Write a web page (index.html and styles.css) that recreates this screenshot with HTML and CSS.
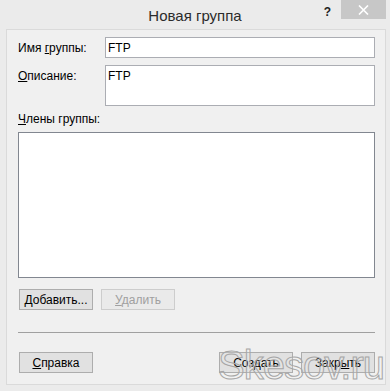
FILE: index.html
```html
<!DOCTYPE html>
<html lang="ru">
<head>
    <meta charset="UTF-8">
    <title>Новая группа</title>
    <link rel="stylesheet" href="styles.css">
</head>
<body>

<div class="window">
    <div class="titlebar">
        <span></span>
        <span class="title">Новая группа</span>
        <div class="controls">
            <span class="help">?</span>
            <span class="close">
                <svg width="11" height="10" viewBox="0 0 11 10">
                    <path d="M1 0.5 L10 9.5 M10 0.5 L1 9.5" stroke="#fff" stroke-width="1.6" fill="none"/>
                </svg>
            </span>
        </div>
    </div>

    <div class="panel">
        <div class="form-grid">
            <label>Имя <u>г</u>руппы:</label>
            <div class="field">FTP</div>
            <label><u>О</u>писание:</label>
            <div class="field area">FTP</div>
        </div>

        <div class="members-label"><u>Ч</u>лены группы:</div>
        <div class="listbox"></div>

        <div class="btn-row">
            <button class="btn"><u>Д</u>обавить...</button>
            <button class="btn" disabled><u>У</u>далить</button>
        </div>

        <div class="separator"></div>

        <div class="btn-row footer">
            <button class="btn"><u>С</u>правка</button>
            <div class="btn-group">
                <button class="btn">Соз<u>д</u>ать</button>
                <button class="btn">Закр<u>ы</u>ть</button>
            </div>
        </div>
    </div>

    <div class="watermark">Skesov.ru</div>
</div>

</body>
</html>
```

FILE: styles.css
```css
/* Global */
* {
    box-sizing: border-box;
    margin: 0;
    padding: 0;
}
body {
    background-color: #ebebeb;
    font-family: 'Liberation Sans', Arial, sans-serif;
    font-size: 12px;
    color: #000;
    overflow: hidden;
}
u {
    text-decoration: underline;
    text-underline-offset: 1px;
}

/* Window frame */
.window {
    position: relative;
    width: 390px;
    height: 391px;
    background-color: #ebebeb;
}
.titlebar {
    display: grid;
    grid-template-columns: 1fr auto 1fr;
    height: 29px;
}
.title {
    font-size: 15px;
    color: #2b2b2b;
    padding-top: 7px;
    line-height: 17px;
}
.controls {
    display: flex;
    justify-content: flex-end;
    align-items: flex-start;
}
.help {
    font-weight: bold;
    font-size: 12px;
    color: #222;
    margin-top: 5px;
    margin-right: 10px;
}
.close {
    display: flex;
    align-items: center;
    justify-content: center;
    width: 45px;
    height: 19px;
    background-color: #c7c7c7;
    margin-right: 4px;
}

/* Client area */
.panel {
    height: 356px;
    margin: 0 4px 0 6px;
    padding: 7px 10px 0 11px;
    background-color: #f0f0f0;
    border: 1px solid #dadada;
}
.form-grid {
    display: grid;
    grid-template-columns: 87px 1fr;
    row-gap: 7px;
}
.form-grid label {
    padding-top: 4px;
    line-height: 14px;
}
.field {
    height: 21px;
    padding: 3px 2px 0;
    line-height: 14px;
    background-color: #fff;
    border: 1px solid #abadb3;
}
.field.area {
    height: 41px;
}
.members-label {
    margin-top: 6px;
    line-height: 15px;
    margin-bottom: 5px;
}
.listbox {
    height: 146px;
    background-color: #fff;
    border: 1px solid #828790;
}

/* Buttons */
.btn-row {
    display: flex;
    gap: 8px;
    margin-top: 11px;
    padding-left: 1px;
}
.btn {
    width: 74px;
    height: 21px;
    font-family: inherit;
    font-size: 12px;
    color: #000;
    background-color: #e1e1e1;
    border: 1px solid #adadad;
}
.btn:disabled {
    color: #a0a0a0;
    background-color: #eaeaea;
    border-color: #cdcdcd;
}
.separator {
    height: 1px;
    margin-top: 22px;
    background-color: #a0a0a0;
}
.footer {
    justify-content: space-between;
    margin-top: 19px;
}
.btn-group {
    display: flex;
    gap: 8px;
}

/* Watermark over the dialog */
.watermark {
    position: absolute;
    right: 6px;
    bottom: 3px;
    font-size: 40px;
    letter-spacing: -1px;
    color: rgba(255, 255, 255, 0.15);
    -webkit-text-stroke: 1px #a6a6a6;
    pointer-events: none;
}
```
